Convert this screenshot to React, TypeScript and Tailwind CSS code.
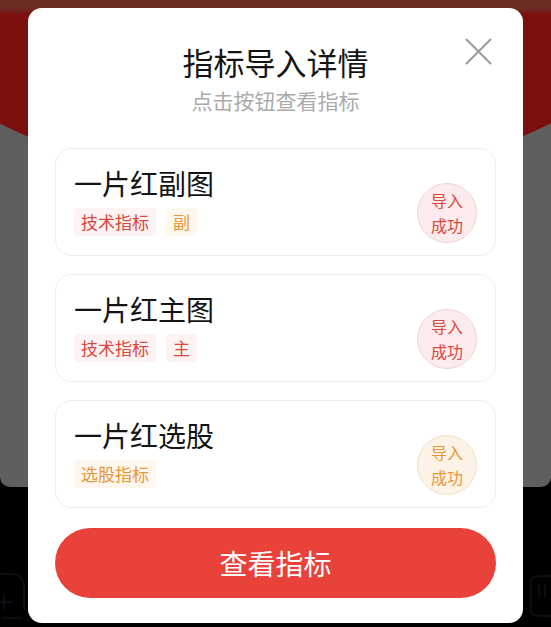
import React from 'react';

interface Indicator {
  name: string;
  tags: { label: string; tone: 'red' | 'orange' }[];
  tone: 'red' | 'orange';
}

const items: Indicator[] = [
  { name: '一片红副图', tags: [{ label: '技术指标', tone: 'red' }, { label: '副', tone: 'orange' }], tone: 'red' },
  { name: '一片红主图', tags: [{ label: '技术指标', tone: 'red' }, { label: '主', tone: 'red' }], tone: 'red' },
  { name: '一片红选股', tags: [{ label: '选股指标', tone: 'orange' }], tone: 'orange' },
];

const font = { fontFamily: '"Noto Sans CJK SC", "Noto Sans", sans-serif' };

export default function App() {
  return (
    <div className="relative w-[551px] h-[627px] overflow-hidden bg-black" style={font}>
      {/* Page behind the dialog */}
      <div className="h-[487px] bg-[#5f5f5f] rounded-b-[10px] relative overflow-hidden">
        <div className="absolute left-[-345px] top-[-1052px] w-[1240px] h-[1240px] rounded-full bg-gradient-to-b from-[#6b2c22] from-[85.5%] to-[#7a100e] to-[86%]" />
      </div>
      <svg className="absolute left-0 top-[570px] opacity-50" width="26" height="52" viewBox="0 0 26 52" fill="none" stroke="#1a2536" strokeWidth="1.5">
        <path d="M-10 4 H12 a12 12 0 0 1 12 12 V40" />
        <path d="M4 24 V40 M-4 32 H12" />
        <path d="M2 48 H22" />
      </svg>
      <svg className="absolute right-0 top-[570px] opacity-50" width="26" height="52" viewBox="0 0 26 52" fill="none" stroke="#1a2536" strokeWidth="1.5">
        <rect x="6" y="6" width="30" height="40" rx="6" />
        <path d="M14 14 V28 M20 14 V28" />
      </svg>

      {/* Dialog */}
      <div className="absolute left-[28px] top-[8px] w-[495px] h-[615px] bg-white rounded-[14px] px-[27px] pt-[34px]">
        <button className="absolute right-[31px] top-[30px] w-[27px] h-[27px]">
          <svg width="27" height="27" viewBox="0 0 27 27" stroke="#9a9a9a" strokeWidth="2" strokeLinecap="round">
            <line x1="1.5" y1="1.5" x2="25.5" y2="25.5" />
            <line x1="25.5" y1="1.5" x2="1.5" y2="25.5" />
          </svg>
        </button>

        <h1 className="text-center text-[31px] leading-[40px] text-[#141414]">指标导入详情</h1>
        <p className="text-center text-[21px] leading-[24px] text-[#ababab] mt-[6px]">点击按钮查看指标</p>

        <div className="flex flex-col gap-[18px] mt-[36px]">
          {items.map((it) => (
            <div key={it.name} className="h-[108px] border border-[#eeeeee] rounded-[16px] flex justify-between pl-[18px] pr-[18px]">
              <div className="pt-[17px]">
                <div className="text-[28px] leading-[34px] text-[#141414]">{it.name}</div>
                <div className="flex gap-[10px] mt-[8px]">
                  {it.tags.map((t) => (
                    <span
                      key={t.label}
                      className={
                        t.tone === 'red'
                          ? 'h-[28px] px-[7px] rounded-[4px] bg-[#fdf3f3] text-[#d9483f] text-[17px] leading-[28px]'
                          : 'h-[28px] px-[7px] rounded-[4px] bg-[#fdf7ee] text-[#e8963a] text-[17px] leading-[28px]'
                      }
                    >
                      {t.label}
                    </span>
                  ))}
                </div>
              </div>
              <div
                className={
                  it.tone === 'red'
                    ? 'self-start mt-[34px] w-[60px] h-[60px] rounded-full border border-[#f0d2d4] bg-[#fcebec] text-[#d9483f] flex flex-col items-center justify-center text-[16px] leading-[25px]'
                    : 'self-start mt-[34px] w-[60px] h-[60px] rounded-full border border-[#f2dfc6] bg-[#fcf2e5] text-[#e8963a] flex flex-col items-center justify-center text-[16px] leading-[25px]'
                }
              >
                <span>导入</span>
                <span>成功</span>
              </div>
            </div>
          ))}
        </div>

        <button className="mt-[20px] w-full h-[70px] rounded-full bg-[#e9423a] text-white text-[28px] leading-[70px]">
          查看指标
        </button>
      </div>
    </div>
  );
}
